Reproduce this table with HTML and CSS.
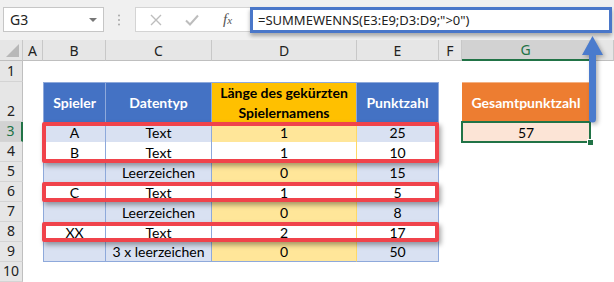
FILE: index.html
```html
<!DOCTYPE html>
<html lang="de">
<head>
    <meta charset="UTF-8">
    <title>SUMMEWENNS</title>
    <link rel="stylesheet" href="styles.css">
</head>
<body>
    <div class="app">
        <!-- Namensfeld und Bearbeitungsleiste -->
        <div class="toolbar">
            <div class="namebox">
                <span>G3</span>
                <span class="caret"></span>
            </div>
            <svg class="grip" width="4" height="12" viewBox="0 0 4 12">
                <circle cx="2" cy="1.5" r="1" />
                <circle cx="2" cy="6" r="1" />
                <circle cx="2" cy="10.5" r="1" />
            </svg>
            <div class="fx-buttons">
                <svg width="12" height="12" viewBox="0 0 12 12">
                    <path d="M1 1 L11 11 M11 1 L1 11" stroke="#bdbdbd" stroke-width="1.4" fill="none" />
                </svg>
                <svg width="14" height="12" viewBox="0 0 14 12">
                    <path d="M1 6.5 L5 10.5 L13 1.5" stroke="#bdbdbd" stroke-width="2" fill="none" />
                </svg>
                <span class="fx">f<small>x</small></span>
            </div>
            <div class="formula">=SUMMEWENNS(E3:E9;D3:D9;"&gt;0")</div>
        </div>

        <!-- Tabellenblatt -->
        <div class="sheet">
            <!-- Spaltenköpfe -->
            <div class="ch corner"></div>
            <div class="ch">A</div>
            <div class="ch">B</div>
            <div class="ch">C</div>
            <div class="ch">D</div>
            <div class="ch">E</div>
            <div class="ch">F</div>
            <div class="ch sel-col">G</div>
            <div class="ch"></div>

            <!-- Zeile 1 -->
            <div class="rh">1</div>
            <div></div><div></div><div></div><div></div><div></div><div></div><div></div><div></div>

            <!-- Zeile 2: Überschriften -->
            <div class="rh">2</div>
            <div></div>
            <div class="c hd first">Spieler</div>
            <div class="c hd">Datentyp</div>
            <div class="c hd gold">Länge des gekürzten<br>Spielernamens</div>
            <div class="c hd">Punktzahl</div>
            <div></div>
            <div class="c hd orange">Gesamtpunktzahl</div>
            <div></div>

            <!-- Zeile 3 -->
            <div class="rh sel-row">3</div>
            <div></div>
            <div class="c band first">A</div>
            <div class="c band">Text</div>
            <div class="c band-y">1</div>
            <div class="c band">25</div>
            <div></div>
            <div class="c total">57</div>
            <div></div>

            <!-- Zeile 4 -->
            <div class="rh">4</div>
            <div></div>
            <div class="c first">B</div>
            <div class="c">Text</div>
            <div class="c y">1</div>
            <div class="c">10</div>
            <div></div><div></div><div></div>

            <!-- Zeile 5 -->
            <div class="rh">5</div>
            <div></div>
            <div class="c band first"></div>
            <div class="c band">Leerzeichen</div>
            <div class="c band-y">0</div>
            <div class="c band">15</div>
            <div></div><div></div><div></div>

            <!-- Zeile 6 -->
            <div class="rh">6</div>
            <div></div>
            <div class="c first">C</div>
            <div class="c">Text</div>
            <div class="c y">1</div>
            <div class="c">5</div>
            <div></div><div></div><div></div>

            <!-- Zeile 7 -->
            <div class="rh">7</div>
            <div></div>
            <div class="c band first"></div>
            <div class="c band">Leerzeichen</div>
            <div class="c band-y">0</div>
            <div class="c band">8</div>
            <div></div><div></div><div></div>

            <!-- Zeile 8 -->
            <div class="rh">8</div>
            <div></div>
            <div class="c first">XX</div>
            <div class="c">Text</div>
            <div class="c y">2</div>
            <div class="c">17</div>
            <div></div><div></div><div></div>

            <!-- Zeile 9 -->
            <div class="rh">9</div>
            <div></div>
            <div class="c band first last"></div>
            <div class="c band last">3 x leerzeichen</div>
            <div class="c band-y last">0</div>
            <div class="c band last">50</div>
            <div></div><div></div><div></div>

            <!-- Zeile 10 -->
            <div class="rh">10</div>
            <div></div><div></div><div></div><div></div><div></div><div></div><div></div><div></div>
        </div>

        <!-- Markierungen -->
        <div class="mark mark-rows"></div>
        <div class="mark mark-c"></div>
        <div class="mark mark-xx"></div>

        <svg class="arrow" width="30" height="96" viewBox="0 0 30 96">
            <path d="M16.5 0 L27 19 L20 19 L20 83 Q20 86.5 16.5 86.5 Q13 86.5 13 83 L13 19 L6 19 Z" fill="#4a7bcd" />
        </svg>
    </div>
</body>
</html>
```

FILE: styles.css
```css
/* Grundlayout */
body {
    margin: 0;
    background: #fff;
    font-family: 'Lato', sans-serif;
}

.app {
    position: relative;
    width: 614px;
    height: 282px;
    overflow: hidden;
}

/* Bearbeitungsleiste */
.toolbar {
    height: 40px;
    background: #f0f0f0;
    display: flex;
    align-items: flex-start;
    padding-top: 7px;
    box-sizing: border-box;
}

.namebox {
    margin-left: 3px;
    width: 101px;
    height: 25px;
    box-sizing: border-box;
    background: #fff;
    border: 1px solid #c6c6c6;
    display: flex;
    align-items: center;
    justify-content: space-between;
    padding: 0 6px 0 6px;
    font-family: 'Noto Sans', sans-serif;
    font-size: 14px;
    color: #222;
}

.caret {
    width: 0;
    height: 0;
    border-left: 4px solid transparent;
    border-right: 4px solid transparent;
    border-top: 4px solid #777;
}

.grip {
    fill: #a8a8a8;
    margin: 7px 0 0 13px;
}

.fx-buttons {
    margin-left: 14px;
    width: 120px;
    height: 25px;
    box-sizing: border-box;
    background: #fff;
    border: 1px solid #d4d4d4;
    display: flex;
    align-items: center;
    gap: 23px;
    padding-left: 14px;
}

.fx {
    font-family: 'Liberation Serif', serif;
    font-style: italic;
    font-size: 15px;
    color: #555;
    margin-left: 1px;
}

.fx small {
    font-size: 11px;
}

.formula {
    margin-left: -5px;
    flex: 1;
    margin-right: 2px;
    height: 26px;
    box-sizing: border-box;
    background: #fff;
    border: 3px solid #4a77c9;
    box-shadow: 0 3px 4px rgba(0, 0, 0, 0.3);
    font-family: 'Noto Sans', sans-serif;
    font-size: 13px;
    color: #222;
    line-height: 20px;
    padding-left: 5px;
}

/* Tabellenraster */
.sheet {
    display: grid;
    grid-template-columns: 23px 20px 63px 106px 145px 82px 23px 128px 1fr;
    grid-template-rows: 21px 21px 40px repeat(8, 20px);
    font-size: 14px;
    color: #000;
}

.ch,
.rh {
    background: #e6e6e6;
    font-family: 'Noto Sans', sans-serif;
    font-size: 14px;
    color: #222;
    display: flex;
    justify-content: center;
    box-sizing: border-box;
}

.ch {
    align-items: center;
    border-right: 1px solid #c8c8c8;
    border-bottom: 1px solid #bfbfbf;
}

.corner {
    position: relative;
}

.corner::after {
    content: '';
    position: absolute;
    right: 3px;
    bottom: 3px;
    border-left: 13px solid transparent;
    border-bottom: 13px solid #b8b8b8;
}

.rh {
    align-items: flex-end;
    padding-bottom: 1px;
    border-right: 1px solid #bfbfbf;
    border-bottom: 1px solid #d4d4d4;
}

.sel-col {
    background: #d2d2d2;
    color: #217346;
    border-bottom: 2px solid #217346;
}

.sel-row {
    background: #d2d2d2;
    color: #217346;
    border-right: 2px solid #217346;
}

/* Zellen der Datentabelle */
.c {
    display: flex;
    align-items: flex-end;
    justify-content: center;
    box-sizing: border-box;
    border-right: 1px solid #8ea9db;
    line-height: 19px;
}

.c.first {
    border-left: 1px solid #8ea9db;
}

.c.last {
    border-bottom: 1px solid #8ea9db;
}

.c.y,
.c.band-y {
    border-right-color: #ffd966;
}

.band {
    background: #d9e1f2;
}

.band-y {
    background: #ffe699;
}

.hd {
    background: #4472c4;
    color: #fff;
    font-weight: bold;
    align-items: center;
    border-top: 1px solid #8ea9db;
}

.hd.gold {
    background: #ffc000;
    color: #000;
    text-align: center;
    line-height: 20px;
    border-right-color: #8ea9db;
}

.hd.orange {
    background: #ed7d31;
    border: none;
    border-top: 1px solid #f4b183;
}

.total {
    background: #fce4d6;
    border: none;
    position: relative;
    outline: 2px solid #217346;
    outline-offset: -1px;
}

.total::after {
    content: '';
    position: absolute;
    right: -4px;
    bottom: -4px;
    width: 5px;
    height: 5px;
    background: #217346;
    border: 1px solid #fff;
}

/* Rote Markierungen über den Zeilen */
.mark {
    position: absolute;
    left: 42px;
    width: 397px;
    box-sizing: border-box;
    border: 4px solid #f0434b;
    border-radius: 2px;
    box-shadow: 2px 3px 5px rgba(0, 0, 0, 0.35);
}

.mark-rows {
    top: 122px;
    height: 41px;
}

.mark-c {
    top: 182px;
    height: 20px;
}

.mark-xx {
    top: 222px;
    height: 20px;
}

/* Pfeil zur Formel */
.arrow {
    position: absolute;
    left: 576px;
    top: 36px;
    filter: drop-shadow(2px 2px 2px rgba(0, 0, 0, 0.3));
}
```
